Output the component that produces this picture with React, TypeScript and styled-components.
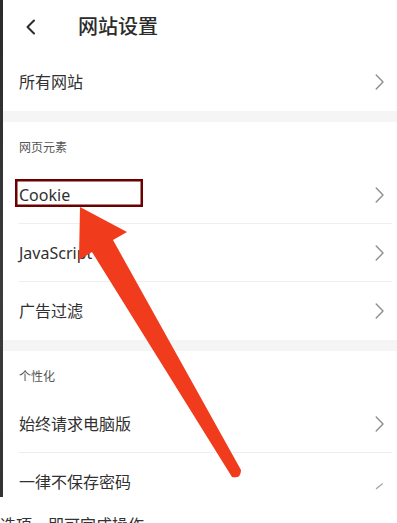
import React from "react";
import styled, { createGlobalStyle } from "styled-components";

const Global = createGlobalStyle`
  html, body { margin: 0; padding: 0; background: #fff; }
  body { font-family: "Noto Sans", "Noto Sans CJK SC", sans-serif; }
`;

const Page = styled.div`
  width: 397px;
  height: 523px;
  overflow: hidden;
  background: #fff;
`;

const Shot = styled.div`
  position: relative;
  display: flex;
  height: 497px;
  overflow: hidden;
`;

const Edge = styled.div`
  width: 3px;
  flex: none;
  background: linear-gradient(#2a2a2a, #3c3c3c 60%, #333);
`;

const Screen = styled.div`
  flex: 1;
  display: flex;
  flex-direction: column;
  background: #fff;
`;

const Header = styled.header`
  flex: none;
  height: 53px;
  display: flex;
  align-items: center;
`;

const BackIcon = styled.svg`
  margin-left: 22px;
  width: 11px;
  height: 16px;
  flex: none;
`;

const Title = styled.h1`
  margin: 0 0 0 42px;
  font-size: 20px;
  line-height: 20px;
  font-weight: 500;
  color: #2b2b2b;
`;

const Row = styled.div<{ $divided?: boolean }>`
  flex: none;
  box-sizing: border-box;
  height: 58px;
  margin: 0 5px 0 16px;
  padding-right: 8px;
  display: flex;
  align-items: center;
  justify-content: space-between;
  border-bottom: 1px solid ${(p) => (p.$divided ? "#eeeeee" : "transparent")};
`;

const Label = styled.span`
  font-size: 16px;
  line-height: 16px;
  color: #303030;
`;

const Band = styled.div`
  flex: none;
  height: 11px;
  background: #f5f5f5;
`;

const SectionTitle = styled.div`
  flex: none;
  box-sizing: border-box;
  height: 44px;
  padding: 20px 0 0 16px;
  font-size: 12px;
  line-height: 12px;
  color: #555;
`;

const ChevronSvg = styled.svg`
  width: 9px;
  height: 16px;
  flex: none;
`;

const Overlay = styled.svg`
  position: absolute;
  left: 0;
  top: 0;
  width: 397px;
  height: 497px;
  pointer-events: none;
`;

const Caption = styled.p`
  margin: 0;
  padding-top: 16px;
  font-size: 16px;
  line-height: 24px;
  color: #333;
  white-space: nowrap;
`;

const Chevron = ({ partial }: { partial?: boolean }) => (
  <ChevronSvg viewBox="0 0 9 16">
    <path
      d={partial ? "M7.2 10 L1.5 14.5" : "M1.2 1 L8 8 L1.2 15"}
      fill="none"
      stroke="#8e8e8e"
      strokeWidth={1.4}
      strokeLinecap="round"
      strokeLinejoin="round"
      opacity={partial ? 0.8 : 1}
    />
  </ChevronSvg>
);

type Item = { label: string; divided?: boolean; partial?: boolean };

const ListRow = ({ label, divided, partial }: Item) => (
  <Row $divided={divided}>
    <Label>{label}</Label>
    <Chevron partial={partial} />
  </Row>
);

export default function App() {
  return (
    <Page>
      <Global />
      <Shot>
        <Edge />
        <Screen>
          <Header>
            <BackIcon viewBox="0 0 11 16">
              <path
                d="M9 1.5 L2.5 8 L9 14.5"
                fill="none"
                stroke="#2b2b2b"
                strokeWidth={2}
                strokeLinecap="round"
                strokeLinejoin="round"
              />
            </BackIcon>
            <Title>网站设置</Title>
          </Header>
          <ListRow label="所有网站" />
          <Band />
          <SectionTitle>网页元素</SectionTitle>
          <ListRow label="Cookie" divided />
          <ListRow label="JavaScript" divided />
          <ListRow label="广告过滤" />
          <Band />
          <SectionTitle>个性化</SectionTitle>
          <ListRow label="始终请求电脑版" divided />
          <ListRow label="一律不保存密码" partial />
        </Screen>
        <Overlay viewBox="0 0 397 497">
          <rect x="16.25" y="180.25" width="125.5" height="25.5" fill="none" stroke="#6a0000" strokeWidth="2.5" />
          <path
            d="M80 207 L127 232 L113 240 L241 470 Q241 479 232 477 L92 252 L79 260 Z"
            fill="#f13b1d"
          />
        </Overlay>
      </Shot>
      <Caption>选项，即可完成操作</Caption>
    </Page>
  );
}
